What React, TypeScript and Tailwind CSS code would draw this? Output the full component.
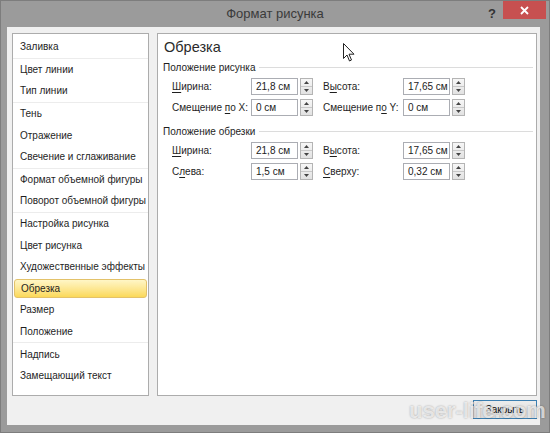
import React from 'react';

const font = { fontFamily: '"Liberation Sans", "DejaVu Sans", sans-serif' };

const groups: string[][] = [
  ['Заливка'],
  ['Цвет линии', 'Тип линии'],
  ['Тень', 'Отражение', 'Свечение и сглаживание'],
  ['Формат объемной фигуры', 'Поворот объемной фигуры'],
  ['Настройка рисунка', 'Цвет рисунка', 'Художественные эффекты', 'Обрезка', 'Размер', 'Положение'],
  ['Надпись', 'Замещающий текст'],
];

function Label({ pre, key1, post }: { pre: string; key1: string; post: string }) {
  return (
    <span className="whitespace-nowrap">
      {pre}
      <span className="underline underline-offset-2">{key1}</span>
      {post}
    </span>
  );
}

function Spin({ value }: { value: string }) {
  return (
    <div className="flex items-center gap-[2px]">
      <div className="w-[47px] h-[17px] border border-[#abadb3] bg-white px-[4px] flex items-center text-[#222] whitespace-nowrap">
        {value}
      </div>
      <div className="w-[13px] h-[17px] border border-[#b4b4b4] bg-gradient-to-b from-[#f7f7f7] to-[#e2e2e2] flex flex-col">
        <div className="flex-1 flex items-center justify-center border-b border-[#c8c8c8]">
          <svg width="5" height="3" viewBox="0 0 5 3"><path d="M0 3 L2.5 0 L5 3 Z" fill="#444" /></svg>
        </div>
        <div className="flex-1 flex items-center justify-center">
          <svg width="5" height="3" viewBox="0 0 5 3"><path d="M0 0 L2.5 3 L5 0 Z" fill="#444" /></svg>
        </div>
      </div>
    </div>
  );
}

function Row({ l1, v1, l2, v2 }: { l1: React.ReactNode; v1: string; l2: React.ReactNode; v2: string }) {
  return (
    <div className="flex items-center h-[21px] pl-[14px]">
      <div className="w-[79px] shrink-0">{l1}</div>
      <Spin value={v1} />
      <div className="w-[90px] shrink-0 pl-[10px]">{l2}</div>
      <Spin value={v2} />
    </div>
  );
}

function Section({ title }: { title: string }) {
  return (
    <div className="flex items-center gap-[4px] h-[18px] pl-[5px] pr-[3px]">
      <span className="text-[#1e1e1e] whitespace-nowrap">{title}</span>
      <div className="flex-1 h-px bg-[#dcdcdc]" />
    </div>
  );
}

export default function App() {
  return (
    <div
      className="relative w-[550px] h-[433px] bg-[#9b9b9b] border border-[#7d7d7d] text-[10px] text-[#1e1e1e] overflow-hidden"
      style={font}
    >
      {/* title bar */}
      <div className="relative h-[26px] flex items-center justify-center">
        <span className="text-[13px] text-[#3a3a3a]">Формат рисунка</span>
        <span className="absolute left-[487px] top-[3px] text-[13px] font-bold text-[#333]">?</span>
        <div className="absolute left-[502px] top-0 w-[43px] h-[18px] bg-[#c75050] flex items-center justify-center">
          <svg width="9" height="9" viewBox="0 0 9 9">
            <path d="M1 1 L8 8 M8 1 L1 8" stroke="#fff" strokeWidth="1.8" />
          </svg>
        </div>
      </div>

      {/* body */}
      <div className="ml-[6px] mr-[9px] h-[398px] bg-[#f0f0f0] pt-[6px] pl-[5px] pr-[3px] flex flex-col">
        <div className="flex gap-[8px] h-[363px]">
          {/* left list */}
          <div className="w-[137px] shrink-0 bg-white border border-[#acacac] pt-[2px]">
            {groups.map((g, gi) => (
              <div key={gi} className={gi < groups.length - 1 ? 'border-b border-[#ececec]' : ''}>
                {g.map((item) => (
                  <div key={item} className="h-[21.6px] px-[1px] py-[1px]">
                    <div
                      className={`h-full flex items-center pl-[6px] rounded-[3px] whitespace-nowrap ${
                        item === 'Обрезка'
                          ? 'bg-gradient-to-b from-[#fff6c6] to-[#fbd957] border border-[#e3c26a] pl-[5px]'
                          : ''
                      }`}
                    >
                      {item}
                    </div>
                  </div>
                ))}
              </div>
            ))}
          </div>

          {/* right panel */}
          <div className="flex-1 bg-white border border-[#acacac] pt-[4px]">
            <div className="pl-[6px] h-[20px] flex items-center text-[14.5px] text-[#2a2a2a]">Обрезка</div>
            <Section title="Положение рисунка" />
            <Row
              l1={<Label pre="" key1="Ш" post="ирина:" />}
              v1="21,8 см"
              l2={<Label pre="В" key1="ы" post="сота:" />}
              v2="17,65 см"
            />
            <Row
              l1={<Label pre="Смещение " key1="п" post="о X:" />}
              v1="0 см"
              l2={<Label pre="Смещение п" key1="о" post=" Y:" />}
              v2="0 см"
            />
            <div className="h-[4px]" />
            <Section title="Положение обрезки" />
            <Row
              l1={<Label pre="" key1="Ш" post="ирина:" />}
              v1="21,8 см"
              l2={<Label pre="В" key1="ы" post="сота:" />}
              v2="17,65 см"
            />
            <Row
              l1={<Label pre="С" key1="л" post="ева:" />}
              v1="1,5 см"
              l2={<Label pre="" key1="С" post="верху:" />}
              v2="0,32 см"
            />
          </div>
        </div>

        {/* footer */}
        <div className="flex justify-end pt-[4px]">
          <div className="w-[64px] h-[19px] border border-[#3c7fb1] bg-gradient-to-b from-[#ececec] to-[#dcdcdc] flex items-center justify-center text-[#111]">
            Закрыть
          </div>
        </div>
      </div>

      {/* watermark */}
      <div className="absolute left-[408px] top-[399px] leading-none text-[22px] font-bold text-white/70 [text-shadow:0_0_2px_rgba(0,0,0,0.35)] pointer-events-none">
        user-life.com
      </div>

      {/* mouse cursor */}
      <svg className="absolute left-[342px] top-[42px]" width="12" height="19" viewBox="0 0 12 19">
        <path d="M0.5 0.5 L0.5 15.5 L4 12 L6.5 18 L8.5 17 L6 11.2 L11 11.2 Z" fill="#fff" stroke="#222" strokeWidth="1" />
      </svg>
    </div>
  );
}
